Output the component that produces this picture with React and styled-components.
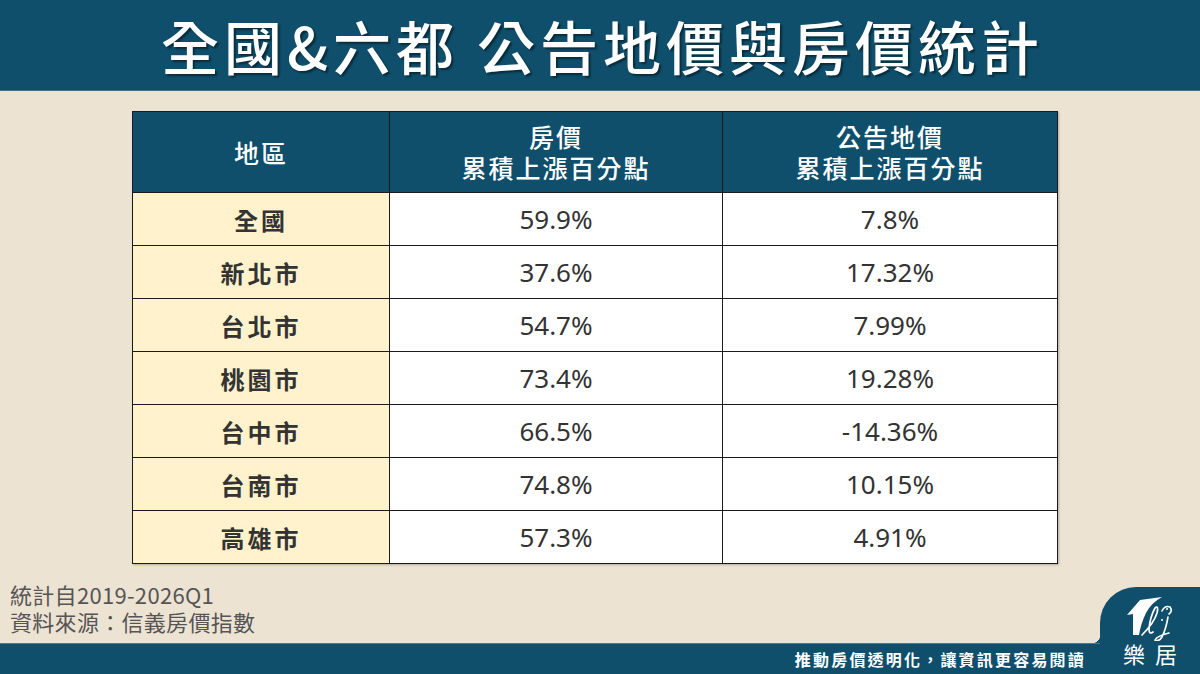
import React from "react";
import styled, { createGlobalStyle } from "styled-components";

const Global = createGlobalStyle`
  html, body { margin: 0; padding: 0; }
  body { font-family: "Noto Sans CJK TC", "Noto Sans", sans-serif; }
`;

const NAVY = "#0f4f6b";

const Page = styled.div`
  width: 1200px;
  height: 674px;
  background: #ede3d3;
  display: flex;
  flex-direction: column;
  overflow: hidden;
`;

const Header = styled.header`
  height: 91px;
  flex: none;
  background: ${NAVY};
  border-bottom: 1px solid #3d6f86;
  box-sizing: border-box;
  display: flex;
  align-items: center;
  justify-content: center;
`;

const Title = styled.h1`
  margin: 0;
  color: #fff;
  font-size: 58px;
  font-weight: 500;
  letter-spacing: 5px;
  padding-left: 5px;
  line-height: 1;
  white-space: nowrap;
  text-shadow: 2px 2px 2px rgba(0, 0, 0, 0.45);
`;

const Main = styled.main`
  flex: 1;
  padding: 20px 0 0 132px;
`;

const Table = styled.table`
  width: 925px;
  border-collapse: collapse;
  table-layout: fixed;
  box-shadow: 1px 1px 2px rgba(0, 0, 0, 0.25);
`;

const Th = styled.th`
  background: ${NAVY};
  color: #fff;
  font-size: 25px;
  font-weight: 500;
  height: 80px;
  line-height: 31px;
  border: 1.5px solid #1b1b1b;
  padding: 0;
  letter-spacing: 2px;
`;

const Td = styled.td`
  height: 52px;
  padding: 0;
  text-align: center;
  border: 1.5px solid #1b1b1b;
  border-top-color: #333;
  background: ${(p) => (p.$label ? "#fff2cc" : "#fff")};
  color: #333;
  font-size: ${(p) => (p.$label ? "24px" : "26px")};
  font-weight: ${(p) => (p.$label ? 700 : 400)};
  letter-spacing: ${(p) => (p.$label ? "3px" : "0")};
  font-family: ${(p) =>
    p.$label
      ? `"Noto Sans CJK TC", sans-serif`
      : `"Noto Sans", "Open Sans", sans-serif`};
`;

const Bottom = styled.div`
  height: 109px;
  flex: none;
  display: flex;
  align-items: flex-end;
`;

const BottomLeft = styled.div`
  flex: 1;
  display: flex;
  flex-direction: column;
  height: 100%;
`;

const Notes = styled.div`
  flex: 1;
  padding: 16px 0 0 10px;
  color: #555;
  font-size: 22px;
  line-height: 27px;
  letter-spacing: 0.3px;
  font-family: "Noto Sans CJK TC", "Noto Sans", sans-serif;
`;

const Bar = styled.div`
  height: 31px;
  flex: none;
  background: ${NAVY};
  border-top: 1px solid #4a7890;
  box-sizing: border-box;
  display: flex;
  align-items: center;
  justify-content: flex-end;
  padding-right: 14px;
`;

const Tagline = styled.span`
  color: #fff;
  font-size: 16px;
  font-weight: 700;
  letter-spacing: 2.2px;
`;

const Tab = styled.div`
  width: 100px;
  height: 87px;
  background: ${NAVY};
  border-top-left-radius: 36px;
  display: flex;
  flex-direction: column;
  align-items: center;
  padding-top: 8px;
  box-sizing: border-box;
  position: relative;
  &::before {
    content: "";
    position: absolute;
    left: -8px;
    bottom: 31px;
    width: 8px;
    height: 8px;
    background: radial-gradient(circle at 0 0, transparent 8px, ${NAVY} 8.5px);
  }
`;

const LogoText = styled.div`
  color: #fff;
  font-size: 22px;
  line-height: 24px;
  letter-spacing: 10px;
  padding-left: 10px;
  font-weight: 400;
`;

const Logo = () => (
  <svg width="60" height="46" viewBox="0 0 60 46">
    <path
      d="M7 20 L20 5 L42 2 Q31 8 26 18 Q21 28 19 40 L13 40 L13 19 Z"
      fill="#fff"
    />
    <path
      d="M22 40 Q34 28 37 18 Q39 10 35 13 Q30 22 29 34 Q29 40 33 37"
      fill="none"
      stroke="#fff"
      strokeWidth="1.7"
      strokeLinecap="round"
    />
    <path
      d="M42 16 Q45 10 50 12 Q53 16 49 19"
      fill="none"
      stroke="#fff"
      strokeWidth="1.6"
      strokeLinecap="round"
    />
    <path
      d="M48 22 Q46 34 42 42 Q39 47 35 45 Q37 41 49 38"
      fill="none"
      stroke="#fff"
      strokeWidth="1.6"
      strokeLinecap="round"
    />
    <circle cx="47" cy="14" r="1" fill="#fff" />
    <circle cx="42" cy="25" r="1" fill="#fff" />
  </svg>
);

const rows = [
  ["全國", "59.9%", "7.8%"],
  ["新北市", "37.6%", "17.32%"],
  ["台北市", "54.7%", "7.99%"],
  ["桃園市", "73.4%", "19.28%"],
  ["台中市", "66.5%", "-14.36%"],
  ["台南市", "74.8%", "10.15%"],
  ["高雄市", "57.3%", "4.91%"],
];

export default function App() {
  return (
    <Page>
      <Global />
      <Header>
        <Title>全國&amp;六都 公告地價與房價統計</Title>
      </Header>
      <Main>
        <Table>
          <colgroup>
            <col style={{ width: 257 }} />
            <col style={{ width: 333 }} />
            <col style={{ width: 335 }} />
          </colgroup>
          <thead>
            <tr>
              <Th>地區</Th>
              <Th>
                房價
                <br />
                累積上漲百分點
              </Th>
              <Th>
                公告地價
                <br />
                累積上漲百分點
              </Th>
            </tr>
          </thead>
          <tbody>
            {rows.map((r) => (
              <tr key={r[0]}>
                <Td $label>{r[0]}</Td>
                <Td>{r[1]}</Td>
                <Td>{r[2]}</Td>
              </tr>
            ))}
          </tbody>
        </Table>
      </Main>
      <Bottom>
        <BottomLeft>
          <Notes>
            統計自2019-2026Q1
            <br />
            資料來源：信義房價指數
          </Notes>
          <Bar>
            <Tagline>推動房價透明化，讓資訊更容易閱讀</Tagline>
          </Bar>
        </BottomLeft>
        <Tab>
          <Logo />
          <LogoText>樂居</LogoText>
        </Tab>
      </Bottom>
    </Page>
  );
}
